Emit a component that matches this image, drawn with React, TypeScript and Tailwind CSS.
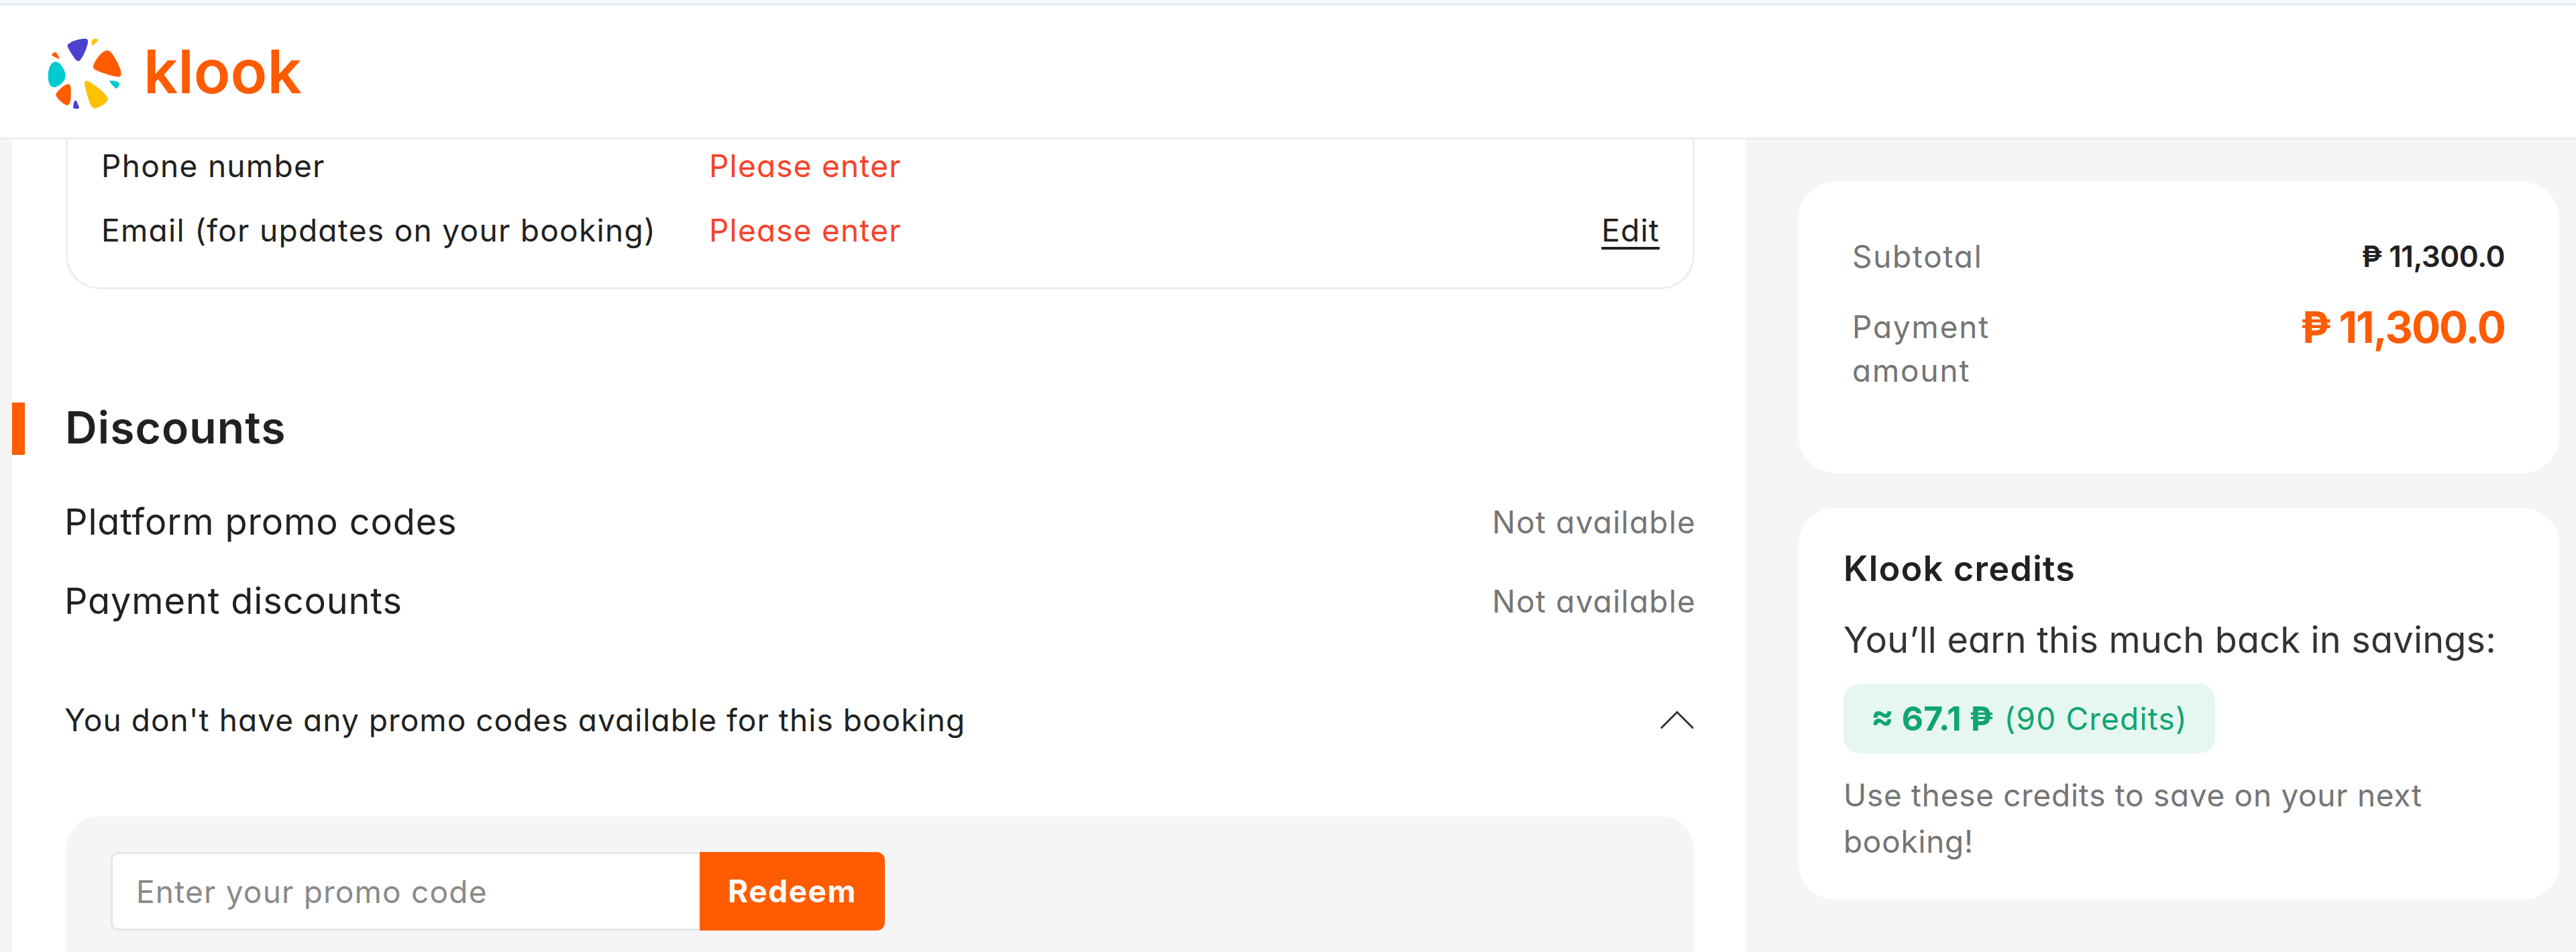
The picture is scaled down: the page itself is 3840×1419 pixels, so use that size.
import { ChevronUp } from "lucide-react";

function KlookLogo() {
  return (
    <svg width="150" height="130" viewBox="0 0 450 390" className="shrink-0">
      <path fill="#4d40cc" d="M160 68 C180 52 215 46 232 47 C244 48 245 58 242 70 C235 100 220 130 207 145 C200 150 192 146 186 138 C172 118 158 98 152 82 C150 76 154 71 160 68 Z" />
      <path fill="#ffc000" d="M262 52 C270 47 282 46 290 52 C282 62 272 72 265 77 C258 78 260 60 262 52 Z" />
      <path fill="#ff5b00" d="M325 100 C340 97 352 112 365 135 C378 158 392 185 392 203 C392 215 382 220 370 217 C340 210 300 198 275 185 C265 180 265 170 270 160 C282 135 305 105 325 100 Z" />
      <path fill="#00cbd1" d="M97 150 C115 148 135 175 143 205 C146 235 120 258 95 264 C75 265 65 245 65 215 C65 185 75 152 97 150 Z" />
      <path fill="#ff5b00" d="M80 120 C85 112 95 105 102 110 C108 118 113 128 117 138 C105 135 90 128 80 120 Z" />
      <path fill="#00cbd1" d="M338 235 C350 233 375 236 384 245 C385 255 378 268 368 270 C358 262 345 248 338 235 Z" />
      <path fill="#ffc000" d="M228 240 C235 232 245 236 260 247 C285 263 320 290 333 312 C335 325 310 350 280 358 C262 360 255 345 250 330 C240 300 228 265 228 240 Z" />
      <path fill="#ff5b00" d="M100 295 C110 278 135 252 158 250 C168 255 168 275 167 300 C167 325 162 345 150 345 C135 340 108 320 100 300 Z" />
      <path fill="#4d40cc" d="M180 335 C183 320 192 320 195 332 C200 345 207 355 203 358 C195 362 180 362 177 355 C177 350 178 342 180 335 Z" />
    </svg>
  );
}

function ContactRow({ label, edit }: { label: string; edit?: boolean }) {
  return (
    <div className="flex items-center h-[62px] pr-[49px]">
      <span className="w-[906px] shrink-0 text-[46px] tracking-[1.3px] leading-[62px] text-[#212121]">{label}</span>
      <span className="text-[46px] tracking-[1.2px] leading-[62px] text-[#f8412a]">Please enter</span>
      {edit && <span className="ml-auto text-[46px] tracking-[1.2px] leading-[62px] text-[#212121] underline underline-offset-[8px]">Edit</span>}
    </div>
  );
}

function DiscountRow({ label }: { label: string }) {
  return (
    <div className="flex items-center justify-between h-[60px] ml-[78px] w-[2432px]">
      <span className="text-[54px] tracking-[0.9px] leading-[60px] text-[#212121]">{label}</span>
      <span className="text-[46px] tracking-[1.2px] leading-[60px] text-[#757575]">Not available</span>
    </div>
  );
}

export default function App() {
  return (
    <div className="h-[1419px] w-full overflow-hidden flex flex-col bg-[#f5f5f5] font-['Inter',sans-serif] [font-feature-settings:'cv11']">
      <div className="h-[8px] shrink-0 bg-[#f5f9ff] border-b-[3px] border-[#e3e7f2]" />
      <header className="h-[200px] shrink-0 bg-white border-b-[3px] border-[#eeeeee] flex items-center pl-[50px] py-[24px]">
        <KlookLogo />
        <span className="ml-[14px] text-[90px] leading-[100px] font-semibold text-[#ff5b00]">klook</span>
      </header>

      <div className="flex flex-1 min-h-0">
        <main className="ml-[18px] w-[2584px] shrink-0 bg-white flex flex-col">
          <section className="ml-[80px] w-[2428px] h-[223px] shrink-0 border-x-[3px] border-b-[3px] border-[#eeeeee] rounded-b-[50px] pl-[50px] pt-[8px]">
            <ContactRow label="Phone number" />
            <div className="mt-[34px]">
              <ContactRow label="Email (for updates on your booking)" edit />
            </div>
          </section>

          <div className="flex items-center h-[78px] mt-[169px] shrink-0">
            <span className="w-[19px] h-[78px] bg-[#ff5b00]" />
            <h2 className="ml-[60px] pb-[4px] text-[66px] tracking-[1.1px] leading-[74px] font-semibold text-[#212121]">Discounts</h2>
          </div>

          <div className="mt-[70px]">
            <DiscountRow label="Platform promo codes" />
          </div>
          <div className="mt-[58px]">
            <DiscountRow label="Payment discounts" />
          </div>

          <div className="flex items-center justify-between h-[60px] ml-[78px] w-[2430px] mt-[117px] shrink-0">
            <span className="text-[46px] tracking-[1.06px] leading-[60px] text-[#212121]">You don't have any promo codes available for this booking</span>
            <ChevronUp className="w-[92px] h-[92px] -mr-[20px] text-[#333333]" strokeWidth={0.8} />
          </div>

          <div className="ml-[80px] w-[2428px] mt-[114px] flex-1 bg-[#f5f5f5] rounded-t-[50px] pl-[67px] pt-[53px]">
            <div className="flex h-[117px]">
              <input
                readOnly
                placeholder="Enter your promo code"
                className="w-[878px] h-[117px] bg-white border-[3px] border-r-0 border-[#e6e6e6] rounded-l-[12px] pl-[35px] text-[46px] tracking-[1.2px] outline-none placeholder:text-[#8a8a8a]"
              />
              <button className="w-[276px] h-[117px] bg-[#ff5b00] rounded-r-[12px] text-white text-[46px] tracking-[1.5px] font-bold">Redeem</button>
            </div>
          </div>
        </main>

        <aside className="flex-1 pl-[79px] pr-[25px] pt-[63px]">
          <div className="h-[434px] bg-white rounded-[55px] pl-[80px] pr-[81px] pt-[80px]">
            <div className="flex justify-between items-center h-[62px]">
              <span className="text-[46px] tracking-[1.7px] leading-[62px] text-[#757575]">Subtotal</span>
              <span className="text-[44px] tracking-[-0.5px] leading-[62px] font-semibold text-[#212121]">₱ 11,300.0</span>
            </div>
            <div className="flex justify-between mt-[42px]">
              <span className="w-[280px] text-[46px] tracking-[1.8px] leading-[65px] text-[#757575]">Payment amount</span>
              <span className="text-[64px] tracking-[-2px] leading-[65px] font-bold text-[#ff5b00]">₱ 11,300.0</span>
            </div>
          </div>

          <div className="h-[584px] mt-[52px] bg-white rounded-[55px] pl-[67px] pt-[61px]">
            <div className="text-[52px] tracking-[1.3px] leading-[60px] font-semibold text-[#212121]">Klook credits</div>
            <div className="mt-[46px] text-[54px] tracking-[0.2px] leading-[60px] text-[#333333]">You’ll earn this much back in savings:</div>
            <div className="mt-[35px] w-[554px] h-[104px] flex items-center bg-[#e6f7f1] rounded-[24px] pl-[41px] text-[#0fa56f]">
              <span className="text-[50px] font-bold">≈ 67.1 ₱</span>
              <span className="ml-[16px] text-[46px] tracking-[1.2px]">(90 Credits)</span>
            </div>
            <div className="mt-[28px] w-[900px] text-[46px] tracking-[0.7px] leading-[69px] text-[#757575]">Use these credits to save on your next booking!</div>
          </div>
        </aside>
      </div>
    </div>
  );
}
